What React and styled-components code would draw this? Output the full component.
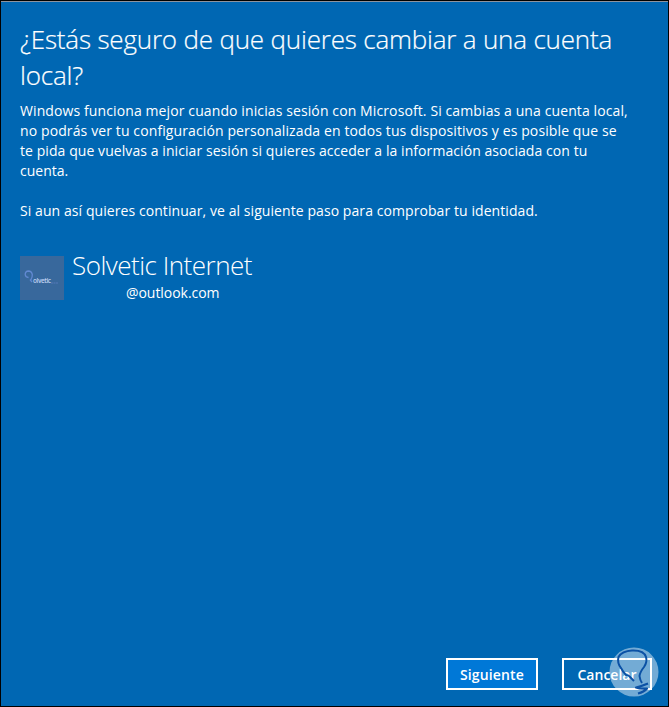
import styled, { createGlobalStyle } from 'styled-components';

const GlobalStyle = createGlobalStyle`
  * {
    box-sizing: border-box;
  }

  body {
    margin: 0;
    background: #0067b3;
    font-family: 'Segoe UI', 'Open Sans', 'Noto Sans', sans-serif;
    color: #fff;
  }
`;

const Dialog = styled.main`
  display: flex;
  flex-direction: column;
  width: 669px;
  height: 707px;
  padding: 20px 16px 16px 19px;
  border: 1px solid #000;
  background: #0067b3;
  box-shadow: inset 0 1px 0 #8c93a0;
`;

const Title = styled.h1`
  margin: 0;
  font-size: 26px;
  font-weight: 300;
  line-height: 36px;
  -webkit-text-stroke: 0.2px #fff;
`;

const Line = styled.span`
  display: block;
  width: max-content;
  letter-spacing: ${({ $spacing }) => $spacing || 0}px;
  white-space: nowrap;
`;

const Text = styled.p`
  margin: ${({ $top }) => $top}px 0 0;
  font-size: 14px;
  line-height: 20px;
`;

const Account = styled.section`
  display: flex;
  gap: 8px;
  margin-top: 25px;
`;

const Avatar = styled.svg`
  width: 44px;
  height: 44px;
  margin-top: 10px;
  background: #38689c;
`;

const Name = styled.h2`
  margin: 0;
  font-size: 26px;
  font-weight: 300;
  line-height: 38px;
`;

const Email = styled.div`
  margin: -1px 0 0 54px;
  font-size: 14px;
  line-height: 20px;
`;

const Footer = styled.footer`
  position: relative;
  display: flex;
  justify-content: flex-end;
  gap: 24px;
  margin-top: auto;
`;

const Button = styled.button`
  display: flex;
  align-items: center;
  justify-content: center;
  width: ${({ $width }) => $width}px;
  height: 32px;
  padding: 2px 0 0;
  border: 2px solid #fff;
  background: ${({ $primary }) => ($primary ? '#0078d7' : 'transparent')};
  color: #fff;
  font-family: inherit;
  font-size: 14px;
  font-weight: 600;
  line-height: 20px;
`;

const Watermark = styled.svg`
  position: absolute;
  right: -7px;
  bottom: -7px;
  width: 50px;
  height: 50px;
  pointer-events: none;
`;

const App = () => (
  <>
    <GlobalStyle />
    <Dialog>
      <Title>
        <Line $spacing={-0.19}>¿Estás seguro de que quieres cambiar a una cuenta</Line>
        <Line $spacing={-0.2}>local?</Line>
      </Title>
      <Text $top={8}>
        <Line $spacing={0.107}>
          Windows funciona mejor cuando inicias sesión con Microsoft. Si cambias a una cuenta local,
        </Line>
        <Line $spacing={0.112}>
          no podrás ver tu configuración personalizada en todos tus dispositivos y es posible que se
        </Line>
        <Line $spacing={0.073}>
          te pida que vuelvas a iniciar sesión si quieres acceder a la información asociada con tu
        </Line>
        <Line>cuenta.</Line>
      </Text>
      <Text $top={20}>
        <Line $spacing={0.075}>Si aun así quieres continuar, ve al siguiente paso para comprobar tu identidad.</Line>
      </Text>
      <Account>
        <Avatar viewBox="0 0 44 44">
          <path
            d="M11 25.500V23.500Q12.500 21 12.300 18.500Q11.500 15 8.500 15Q5.200 15.200 5.200 18.500Q5.500 21.500 8.500 21.500M10 23.500L12 26"
            fill="none"
            stroke="#6289d2"
            strokeWidth="1.300"
          />
          <text x="13" y="26.500" fill="#bfd0f0" fontSize="6.500" fontWeight="600" textLength="18">
            olvetic
          </text>
          <path d="M31 27H38" stroke="#5578b8" strokeWidth="1" strokeDasharray="2 .5" />
        </Avatar>
        <div>
          <Name>
            <Line $spacing={-0.5}>Solvetic Internet</Line>
          </Name>
          <Email>
            <Line $spacing={-0.05}>@outlook.com</Line>
          </Email>
        </div>
      </Account>
      <Footer>
        <Button $primary $width={92}>
          <Line $spacing={0.15}>Siguiente</Line>
        </Button>
        <Button $width={90}>
          <Line>Cancelar</Line>
        </Button>
        <Watermark viewBox="0 0 50 50">
          <circle cx="25" cy="25" r="24.500" fill="#fff" fillOpacity=".45" />
          <path
            d="M25 34L21 30Q20 28 17 28Q14 25 12 21Q8 16 9.500 10Q13 4 23 3.500Q35 3 37 10Q38.500 15 35 20Q31 25 30.500 29Q31 33 33 36"
            fill="none"
            stroke="#0b51a5"
            strokeWidth="2"
          />
          <path
            d="M39 36.500Q33 39 27 40.500Q31 42 38 41.500Q35 45 29 46.500"
            fill="none"
            stroke="#0b51a5"
            strokeWidth="2.200"
            strokeLinejoin="round"
          />
        </Watermark>
      </Footer>
    </Dialog>
  </>
);

export default App;
